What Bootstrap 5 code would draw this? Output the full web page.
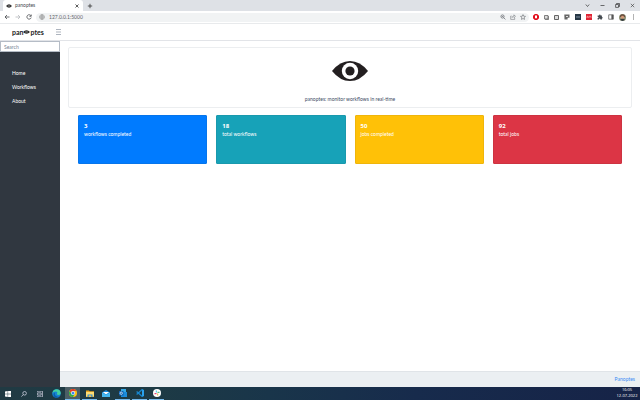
<!DOCTYPE html>
<html lang="en">
<head>
<meta charset="utf-8">
<meta name="viewport" content="width=device-width, initial-scale=1">
<title>panoptes</title>
<link href="https://cdn.jsdelivr.net/npm/bootstrap@5.3.0/dist/css/bootstrap.min.css" rel="stylesheet">
<style>
body{font-family:Lato,"Open Sans",sans-serif;font-size:5px;line-height:7px;color:#3c4b64;background:#fff}
button{border:0;background:none;padding:0;color:inherit;line-height:0;display:flex}
svg{display:block;flex:none}
.tabstrip{background:#dee1e6;height:11px}
.tab{background:#fff;width:80px;height:11px;margin-left:3px;padding:0 4px 0 3px;border-radius:3px 3px 0 0;color:#45494d;gap:3px}
.wincontrols{gap:10px;padding-right:5px;color:#333}
.toolbar{height:13px;border-bottom:1px solid #e8eaec;padding:0 4px 0 4px;color:#5f6368}
.navbtns{gap:5px}
.address{background:#f1f3f4;border-radius:5px;height:9px;padding:0 3px;gap:4px;margin:0 4px}
.address input{font-size:5px;line-height:7px;color:#5f6368;background:none;border:0;padding:0;outline:0;min-width:0}
.extensions{gap:5px}
.sidebar{width:60px;background:#303740;color:#fff}
.brandbar{height:17px;border-bottom:1px solid #e2e4e8}
.brand{width:60px;padding-left:12px;font-size:7px;line-height:10px;color:#222;text-decoration:none}
.toggler{color:#8a93a2;margin-left:-5px}
.search{font-size:5px;line-height:7px;height:11px;border:1px solid #b5bcc6;border-radius:0;padding:0 3px}
.search::placeholder{color:#768192}
.sidenav{padding:14px 0 0}
.sidenav .nav-link{font-size:5px;line-height:7px;padding:4px 12px 3px;color:#fff}
.hero{border:1px solid #eceef0;border-radius:2px;height:61px;padding:13px 0 4px;margin:6px 8px 7px}
.stats{margin:0 18px;gap:9px}
.stat{height:49px;border-radius:1px;padding:6px 5px;color:#fff}
.stat strong{font-family:"Open Sans",sans-serif;font-size:6px;line-height:9px;font-weight:700}
.blue{background:#007bff;border:1px solid #0675eb}
.teal{background:#17a2b8;border:1px solid #1999ad}
.amber{background:#ffc107;border:1px solid #efb50b}
.red{background:#dc3545;border:1px solid #cd3341}
.pagefoot{height:16px;background:#ebeff2;border-top:1px solid #e0e4e8;padding:0 5px}
.pagefoot a{color:#3b8cf5;text-decoration:none}
.taskbar{height:13px;background:linear-gradient(90deg,#203a43 0,#1d3a45 25%,#19354a 42%,#172b4c 65%,#162347 100%);color:#fff}
.task{width:16px;height:13px;align-items:center;justify-content:center}
.task.open{width:15px;margin:0 1px;border-bottom:1px solid #76b9ed}
.task.current{background:#4b5e65}
.clock{font-size:4px;line-height:6px;padding-right:2px;width:24px;font-family:"Open Sans",sans-serif}
</style>
</head>
<body class="min-vh-100 d-flex flex-column">
<header>
  <div class="tabstrip d-flex align-items-center">
    <div class="tab d-flex align-items-center">
      <svg width="6" height="4" viewBox="0 0 36 20"><path d="M0 10Q18-10 36 10Q18 30 0 10" fill="#333"/><circle cx="18" cy="10" r="5" fill="#888"/></svg>
      <span class="me-auto">panoptes</span>
      <button aria-label="Close tab"><svg width="4" height="4" viewBox="0 0 4 4"><path d="M.5.5l3 3m0-3l-3 3" stroke="#333" stroke-width=".8"/></svg></button>
    </div>
    <button class="ms-1" aria-label="New tab"><svg width="6" height="6" viewBox="0 0 6 6"><path d="M3 .8v4.4M.8 3h4.4" stroke="#333" stroke-width=".8"/></svg></button>
    <div class="wincontrols d-flex align-items-center ms-auto">
      <button aria-label="Search tabs"><svg width="5" height="5" viewBox="0 0 5 5"><path d="M.8 1.5l1.7 2 1.7-2" fill="none" stroke="currentColor" stroke-width=".7"/></svg></button>
      <button aria-label="Minimize"><svg width="5" height="5" viewBox="0 0 5 5"><path d="M.5 2.5h4" stroke="currentColor" stroke-width=".7"/></svg></button>
      <button aria-label="Restore"><svg width="5" height="5" viewBox="0 0 5 5"><path d="M.6 1.5h2.9v2.9H.6zM1.5 1.3V.5h3v3h-.8" fill="none" stroke="currentColor" stroke-width=".7"/></svg></button>
      <button aria-label="Close"><svg width="5" height="5" viewBox="0 0 5 5"><path d="M.8.8l3.4 3.4m0-3.4L.8 4.2" stroke="currentColor" stroke-width=".6"/></svg></button>
    </div>
  </div>
  <div class="toolbar d-flex align-items-center">
    <div class="navbtns d-flex">
      <button aria-label="Back"><svg width="6" height="6" viewBox="0 0 6 6"><path d="M5.5 3H1m2-2L1 3l2 2" fill="none" stroke="#4a4d51" stroke-width=".8"/></svg></button>
      <button aria-label="Forward"><svg width="6" height="6" viewBox="0 0 6 6"><path d="M.5 3H5M3 1l2 2-2 2" fill="none" stroke="#b5b8bb" stroke-width=".8"/></svg></button>
      <button aria-label="Reload"><svg width="6" height="6" viewBox="0 0 6 6"><path d="M5 1.8A2.2 2.2 0 1 0 5.2 3.6M5.2.5v1.8H3.4" fill="none" stroke="#4a4d51" stroke-width=".8"/></svg></button>
    </div>
    <div class="address d-flex align-items-center flex-grow-1">
      <svg width="6" height="6" viewBox="0 0 6 6"><path d="M3 .6a2.4 2.4 0 1 0 0 4.8a2.4 2.4 0 1 0 0-4.8M3 .6Q1 3 3 5.4Q5 3 3 .6M.6 3h4.8" fill="none" stroke="#777" stroke-width=".5"/></svg>
      <input class="flex-grow-1" aria-label="Address" value="127.0.0.1:5000">
      <button aria-label="Zoom"><svg width="6" height="6" viewBox="0 0 6 6"><circle cx="2.5" cy="2.5" r="1.6" fill="none" stroke="currentColor" stroke-width=".7"/><path d="M3.7 3.7l1.7 1.7M1.8 2.5h1.4" stroke="currentColor" stroke-width=".7"/></svg></button>
      <button aria-label="Share"><svg width="6" height="6" viewBox="0 0 6 6"><path d="M1.6 2H.7v3.4h4V4M2 4Q2.2 2 4 2V.8L5.5 2.4 4 3.7V2.8" fill="none" stroke="currentColor" stroke-width=".5"/></svg></button>
      <button aria-label="Bookmark"><svg width="6" height="6" viewBox="0 0 6 6"><path d="M3 .6l.7 1.6 1.8.2-1.3 1.2.3 1.8L3 4.5l-1.5.9.3-1.8L.5 2.4l1.8-.2z" fill="none" stroke="currentColor" stroke-width=".6"/></svg></button>
    </div>
    <div class="extensions d-flex align-items-center">
      <button aria-label="Ad blocker"><svg width="6" height="6" viewBox="0 0 6 6"><path d="M1.8 0h2.4L6 1.8v2.4L4.2 6H1.8L0 4.2V1.8z" fill="#e2111f"/><path d="M2 2.5v1.2l1 1.1 1-1V1.5H2z" fill="#fff"/></svg></button>
      <button aria-label="Copy page"><svg width="5" height="5" viewBox="0 0 5 5"><path d="M.5.5h3.500v3.500H.5z" fill="#ddd" stroke="#666" stroke-width=".8"/><path d="M1 4.600h3.600V1" fill="none" stroke="#666" stroke-width=".8"/></svg></button>
      <button aria-label="Capture"><svg width="5" height="5" viewBox="0 0 5 5"><path d="M.5.5h4v4h-4z" fill="#ddd" stroke="#666"/></svg></button>
      <button aria-label="Notes"><svg width="6" height="6" viewBox="0 0 6 6"><path d="M.3.5h5.2v3.2H3.6v1.8H.5z" fill="#666"/><path d="M2 2h2v1H2z" fill="#ddd"/></svg></button>
      <button aria-label="Dark extension"><svg width="6" height="6" viewBox="0 0 6 6"><path d="M0 0h6v6H0z" fill="#263746"/><path d="M1 3h4" stroke="#9ab" stroke-width=".8"/></svg></button>
      <button aria-label="Red extension"><svg width="6" height="6" viewBox="0 0 6 6"><path d="M0 0h6v6H0z" fill="#df2434"/><path d="M1 4V2.3h1V4m1 0V2.3h2V4" fill="none" stroke="#fbb" stroke-width=".6"/></svg></button>
      <button aria-label="Extensions"><svg width="6" height="6" viewBox="0 0 6 6"><path d="M.6 1.6h1.5Q2 .4 2.8.4T3.6 1.6h1.3V3q.8 0 .8.7t-.8.7v1.1H3.4Q3.3 4.5 2.7 4.5T2 5.5H.6V4q.9 0 .9-.6T.6 2.8z" fill="#444a50"/></svg></button>
      <button aria-label="Side panel"><svg width="6" height="6" viewBox="0 0 6 6"><path d="M.7.8h4.6v4.4H.7z" fill="none" stroke="#555" stroke-width=".7"/><path d="M3.4.8h1.9v4.4H3.4z" fill="#555"/></svg></button>
      <button aria-label="Profile"><svg width="7" height="7" viewBox="0 0 7 7"><circle cx="3.5" cy="3.5" r="3.5" fill="#8d8f75"/><path d="M1 1.6Q3.5-1 6 1.6V3H1z" fill="#6b5040"/><circle cx="3.5" cy="3.3" r="1.6" fill="#d39b78"/><path d="M1 5.8q2.5-2 5 0Q3.5 8 1 5.8" fill="#343f43"/></svg></button>
      <button aria-label="Menu"><svg width="5" height="6" viewBox="0 0 5 6"><path d="M2.5.5v1m0 1v1m0 1v1" stroke="#666"/></svg></button>
    </div>
  </div>
</header>
<div class="brandbar d-flex align-items-center">
  <a class="brand d-flex align-items-center fw-bold" href="#"><span>pan</span><svg width="7" height="4" viewBox="0 0 7 4"><path d="M0 2Q3.500-1.500 7 2Q3.500 5.500 0 2" fill="#222"/><circle cx="3.500" cy="2" r="1.200" fill="#888"/><circle cx="3.500" cy="2" r=".6" fill="#222"/></svg><span>ptes</span></a>
  <button class="toggler" aria-label="Toggle sidebar"><svg width="7" height="6" viewBox="0 0 7 6"><path d="M1 .5h5M1 3h5M1 5.500h5" stroke="currentColor" stroke-width=".7"/></svg></button>
</div>
<div class="d-flex flex-grow-1">
  <aside class="sidebar flex-shrink-0">
    <input class="form-control search" type="search" placeholder="Search" aria-label="Search">
    <nav class="nav flex-column sidenav">
      <a class="nav-link" href="#">Home</a>
      <a class="nav-link" href="#">Workflows</a>
      <a class="nav-link" href="#">About</a>
    </nav>
  </aside>
  <div class="d-flex flex-column flex-grow-1">
    <main class="flex-grow-1">
      <section class="hero d-flex flex-column align-items-center justify-content-between">
        <svg width="36" height="20" viewBox="0 0 36 20" role="img" aria-label="Eye"><path d="M0 10Q8 0 18 0T36 10Q28 20 18 20T0 10" fill="#231f20"/><circle cx="18" cy="10" r="8.200" fill="#fff"/><circle cx="18" cy="10" r="4.600" fill="#231f20"/></svg>
        <span>panoptes: monitor workflows in real-time</span>
      </section>
      <section class="stats d-flex">
        <div class="stat blue flex-fill w-25 d-flex flex-column"><strong>3</strong><span>workflows completed</span></div>
        <div class="stat teal flex-fill w-25 d-flex flex-column"><strong>18</strong><span>total workflows</span></div>
        <div class="stat amber flex-fill w-25 d-flex flex-column"><strong>50</strong><span>jobs completed</span></div>
        <div class="stat red flex-fill w-25 d-flex flex-column"><strong>92</strong><span>total jobs</span></div>
      </section>
    </main>
    <footer class="pagefoot d-flex align-items-center justify-content-end"><a href="#">Panoptes</a></footer>
  </div>
</div>
<div class="taskbar d-flex">
  <button class="task" aria-label="Start"><svg width="6" height="6" viewBox="0 0 6 6"><path d="M0 .4l2.700-.3v2.700H0zM3.100.1H6v2.700H3.100zM0 3.200h2.700v2.700L0 5.600zM3.100 3.200H6V6H3.100z" fill="#fff"/></svg></button>
  <button class="task" aria-label="Search"><svg width="6" height="6" viewBox="0 0 6 6"><circle cx="3.600" cy="2.300" r="1.800" fill="none" stroke="#dde" stroke-width=".7"/><path d="M2.300 3.600L.4 5.600" stroke="#dde" stroke-width=".7"/></svg></button>
  <button class="task" aria-label="Task view"><svg width="6" height="6" viewBox="0 0 6 6"><path d="M.4 2h3.800v2H.4zM.4 0v.8h3.800V0M.4 6v-.8h3.800V6M5.500 0v6" fill="none" stroke="#ccd" stroke-width=".7"/></svg></button>
  <button class="task" aria-label="Edge"><svg width="9" height="9" viewBox="0 0 9 9"><circle cx="4.500" cy="4.500" r="4.300" fill="#1683d3"/><path d="M.4 4Q1 .2 4.700.2T8.800 4.200Q8.600 6 6.500 6T5 4.600Q6 2.500 3.600 2.500T.4 4" fill="#43cfa0"/><path d="M3 3.600Q2 6.500 5 7.500T8 6.800Q6.500 9 4 8.700T1.500 5Q2 4 3 3.600" fill="#0b5aa8"/></svg></button>
  <button class="task open current" aria-label="Chrome"><svg width="8" height="8" viewBox="0 0 8 8"><circle cx="4" cy="4" r="4" fill="#fbc116"/><path d="M.5 2A4 4 0 0 1 7.500 2H4Q2.500 2 2.200 4z" fill="#e33b2e"/><path d="M.5 2A4 4 0 0 0 4 8L5.600 5 2.300 5z" fill="#2da94f"/><circle cx="4" cy="4" r="2" fill="#fff"/><circle cx="4" cy="4" r="1.500" fill="#4285f4"/></svg></button>
  <button class="task open" aria-label="File Explorer"><svg width="8" height="7" viewBox="0 0 8 7"><path d="M0 .5h3l.6.8H8V7H0z" fill="#e8a520"/><path d="M0 2h8v4.500H0z" fill="#ffdc72"/><path d="M1.500 7V4.500h5V7H5.300V5.500H2.700V7z" fill="#358cc9"/></svg></button>
  <button class="task" aria-label="Mail"><svg width="8" height="7" viewBox="0 0 8 7"><path d="M0 2.500L4 0l4 2.500V7H0z" fill="#1686d9"/><path d="M.8 2h6.400L4 4.600z" fill="#fff"/><path d="M0 2.500l4 2.500 4-2.500V7H0z" fill="#45b9f2"/></svg></button>
  <button class="task open" aria-label="Outlook"><svg width="8" height="8" viewBox="0 0 8 8"><path d="M2 0h5v3H2z" fill="#35a9e8"/><path d="M2 3h6v5H2z" fill="#1b8bdc"/><path d="M0 2h4.500v4.500H0z" fill="#0b5fb2"/><circle cx="2.200" cy="4.200" r="1.200" fill="none" stroke="#fff" stroke-width=".7"/></svg></button>
  <button class="task open" aria-label="Visual Studio Code"><svg width="8" height="8" viewBox="0 0 8 8"><path d="M6 0l2 1v6L6 8z" fill="#2ba2ed"/><path d="M6.200.6L.6 5.500M6.200 7.400L.6 2.500" stroke="#1685ce" stroke-width="1.300"/></svg></button>
  <button class="task open" aria-label="Slack"><svg width="8" height="8" viewBox="0 0 8 8"><circle cx="4" cy="4" r="4" fill="#fff"/><path d="M3.300 1.500v2" stroke="#36c5f0"/><path d="M4.500 3.300h2" stroke="#2eb67d"/><path d="M4.700 4.500v2" stroke="#ecb22e"/><path d="M1.500 4.700h2" stroke="#e01e5a"/></svg></button>
  <div class="clock ms-auto text-center"><div>16:05</div><div>12-07-2022</div></div>
</div>
<script src="https://cdn.jsdelivr.net/npm/bootstrap@5.3.0/dist/js/bootstrap.bundle.min.js"></script>
</body>
</html>
